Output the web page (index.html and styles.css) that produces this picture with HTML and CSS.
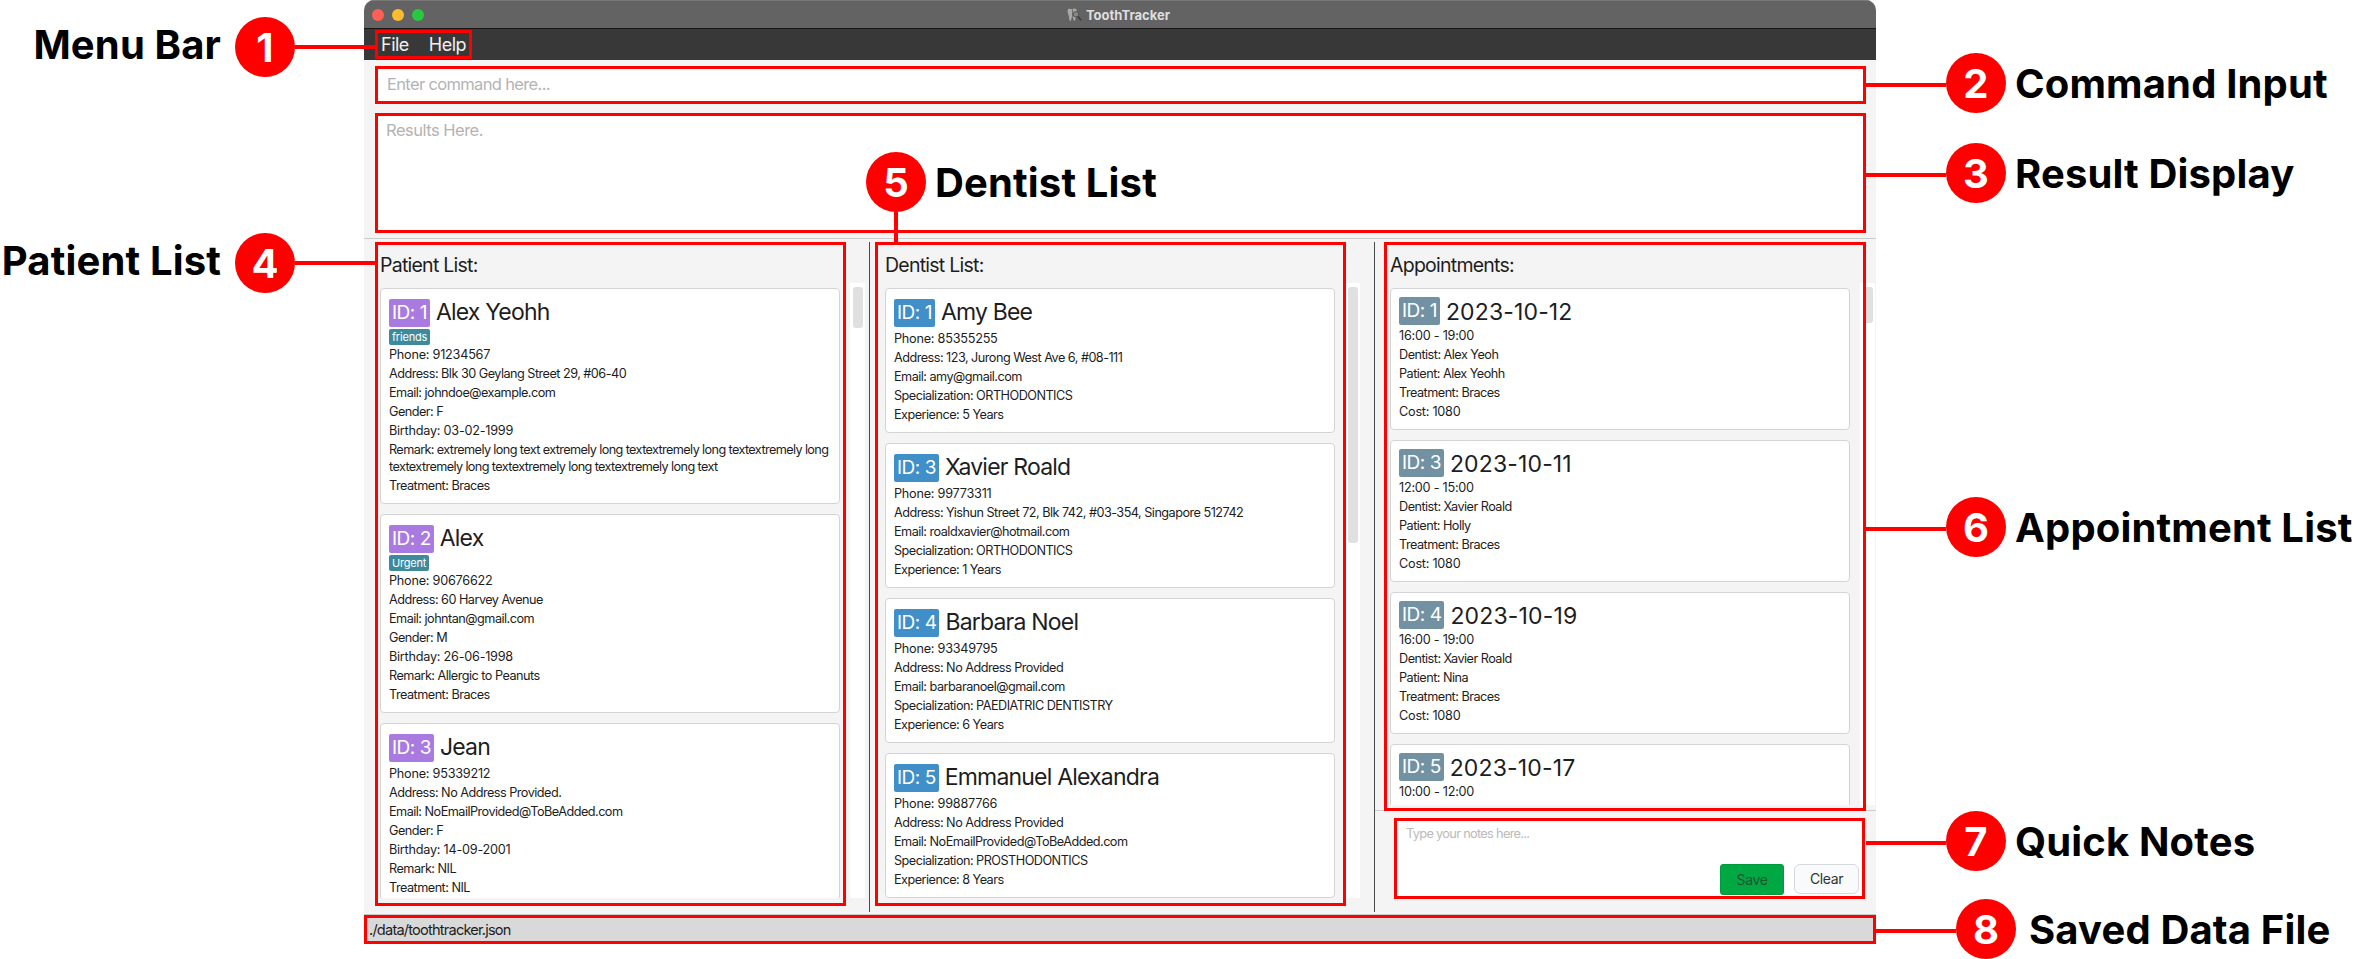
FILE: index.html
```html
<!DOCTYPE html>
<html lang="en">
<head>
<meta charset="utf-8">
<title>ToothTracker</title>
<link rel="stylesheet" href="styles.css">
</head>
<body>
<main class="window">
  <header class="titlebar">
    <div class="lights"><i class="light close"></i><i class="light min"></i><i class="light max"></i></div>
    <div class="title">
      <svg class="app-icon" viewBox="0 0 15 14" width="15" height="14">
        <path d="M1 1.2C2.5 0 4 1.600 5.500 1C7 0 8.500 0.400 9.300 1.200C10.500 3 9.500 6 8.800 8C8.500 10 8.300 13 7.300 13C6.300 13 6.500 9 5.400 9C4.300 9 4.400 13 3.300 13C2.200 13 2.200 9.500 1.700 7.500C1 5 0 3 1 1.200Z" fill="#a9a9a9"/>
        <path d="M5.600 1.500V9" stroke="#666" stroke-width="1"/>
        <circle cx="9" cy="6.300" r="2.700" fill="#8a8a8a" stroke="#505050" stroke-width="1"/>
        <path d="M11 8.500L14 12.300" stroke="#3c3c3c" stroke-width="1.500"/>
      </svg>
      <span>ToothTracker</span>
    </div>
  </header>
  <nav class="menubar"><span class="menu-file">File</span><span>Help</span></nav>
  <div class="command">Enter command here...</div>
  <div class="result">Results Here.</div>
  <div class="panes">
    <section class="pane patients">
      <h2>Patient List:</h2>
      <div class="list">
        <div class="cards">
          <article class="card">
            <div class="head"><b class="badge">ID: 1</b><span class="name">Alex Yeohh</span></div>
            <div class="tags"><span class="tag">friends</span></div>
            <p class="digits">Phone: 91234567</p>
            <p>Address: Blk 30 Geylang Street 29, #06-40</p>
            <p>Email: johndoe@example.com</p>
            <p>Gender: F</p>
            <p class="digits">Birthday: 03-02-1999</p>
            <p class="long">Remark: extremely long text extremely long textextremely long textextremely long<br>textextremely long textextremely long textextremely long text</p>
            <p>Treatment: Braces</p>
          </article>
          <article class="card">
            <div class="head"><b class="badge">ID: 2</b><span class="name">Alex</span></div>
            <div class="tags"><span class="tag">Urgent</span></div>
            <p class="digits">Phone: 90676622</p>
            <p>Address: 60 Harvey Avenue</p>
            <p>Email: johntan@gmail.com</p>
            <p>Gender: M</p>
            <p class="digits">Birthday: 26-06-1998</p>
            <p>Remark: Allergic to Peanuts</p>
            <p>Treatment: Braces</p>
          </article>
          <article class="card">
            <div class="head"><b class="badge">ID: 3</b><span class="name">Jean</span></div>
            <p class="digits">Phone: 95339212</p>
            <p>Address: No Address Provided.</p>
            <p>Email: NoEmailProvided@ToBeAdded.com</p>
            <p>Gender: F</p>
            <p class="digits">Birthday: 14-09-2001</p>
            <p>Remark: NIL</p>
            <p>Treatment: NIL</p>
          </article>
        </div>
        <div class="track"><div class="thumb"></div></div>
      </div>
    </section>
    <section class="pane dentists">
      <h2>Dentist List:</h2>
      <div class="list">
        <div class="cards">
          <article class="card">
            <div class="head"><b class="badge">ID: 1</b><span class="name">Amy Bee</span></div>
            <p class="digits">Phone: 85355255</p>
            <p>Address: 123, Jurong West Ave 6, #08-111</p>
            <p>Email: amy@gmail.com</p>
            <p>Specialization: ORTHODONTICS</p>
            <p>Experience: 5 Years</p>
          </article>
          <article class="card">
            <div class="head"><b class="badge">ID: 3</b><span class="name">Xavier Roald</span></div>
            <p class="digits">Phone: 99773311</p>
            <p>Address: Yishun Street 72, Blk 742, #03-354, Singapore 512742</p>
            <p>Email: roaldxavier@hotmail.com</p>
            <p>Specialization: ORTHODONTICS</p>
            <p>Experience: 1 Years</p>
          </article>
          <article class="card">
            <div class="head"><b class="badge">ID: 4</b><span class="name">Barbara Noel</span></div>
            <p class="digits">Phone: 93349795</p>
            <p>Address: No Address Provided</p>
            <p>Email: barbaranoel@gmail.com</p>
            <p>Specialization: PAEDIATRIC DENTISTRY</p>
            <p>Experience: 6 Years</p>
          </article>
          <article class="card">
            <div class="head"><b class="badge">ID: 5</b><span class="name">Emmanuel Alexandra</span></div>
            <p class="digits">Phone: 99887766</p>
            <p>Address: No Address Provided</p>
            <p>Email: NoEmailProvided@ToBeAdded.com</p>
            <p>Specialization: PROSTHODONTICS</p>
            <p>Experience: 8 Years</p>
          </article>
        </div>
        <div class="track"><div class="thumb"></div></div>
      </div>
    </section>
    <section class="pane appointments">
      <h2>Appointments:</h2>
      <div class="list">
        <div class="cards">
          <article class="card">
            <div class="head"><b class="badge">ID: 1</b><span class="name">2023-10-12</span></div>
            <p class="digits">16:00 - 19:00</p>
            <p>Dentist: Alex Yeoh</p>
            <p>Patient: Alex Yeohh</p>
            <p>Treatment: Braces</p>
            <p class="digits">Cost: 1080</p>
          </article>
          <article class="card">
            <div class="head"><b class="badge">ID: 3</b><span class="name">2023-10-11</span></div>
            <p class="digits">12:00 - 15:00</p>
            <p>Dentist: Xavier Roald</p>
            <p>Patient: Holly</p>
            <p>Treatment: Braces</p>
            <p class="digits">Cost: 1080</p>
          </article>
          <article class="card">
            <div class="head"><b class="badge">ID: 4</b><span class="name">2023-10-19</span></div>
            <p class="digits">16:00 - 19:00</p>
            <p>Dentist: Xavier Roald</p>
            <p>Patient: Nina</p>
            <p>Treatment: Braces</p>
            <p class="digits">Cost: 1080</p>
          </article>
          <article class="card">
            <div class="head"><b class="badge">ID: 5</b><span class="name">2023-10-17</span></div>
            <p class="digits">10:00 - 12:00</p>
          </article>
        </div>
        <div class="track"><div class="thumb"></div></div>
      </div>
      <div class="notes-area">
        <div class="notes">
          <span class="placeholder">Type your notes here...</span>
          <div class="buttons"><span class="btn save">Save</span><span class="btn clear">Clear</span></div>
        </div>
      </div>
    </section>
  </div>
  <footer class="status">./data/toothtracker.json</footer>
</main>

<!-- Annotation layer over the window -->
<div class="frame f1"></div>
<div class="frame f2"></div>
<div class="frame f3"></div>
<div class="frame f4"></div>
<div class="frame f5"></div>
<div class="frame f6"></div>
<div class="frame f7"></div>
<div class="frame f8"></div>
<div class="callout left c1"><span class="label">Menu Bar</span><b class="num">1</b><i class="wire"></i></div>
<div class="callout right c2"><i class="wire"></i><b class="num">2</b><span class="label">Command Input</span></div>
<div class="callout right c3"><i class="wire"></i><b class="num">3</b><span class="label">Result Display</span></div>
<div class="callout left c4"><span class="label">Patient List</span><b class="num">4</b><i class="wire"></i></div>
<div class="callout right c5"><b class="num">5</b><span class="label">Dentist List</span><i class="drop"></i></div>
<div class="callout right c6"><i class="wire"></i><b class="num">6</b><span class="label">Appointment List</span></div>
<div class="callout right c7"><i class="wire"></i><b class="num">7</b><span class="label">Quick Notes</span></div>
<div class="callout right c8"><i class="wire"></i><b class="num">8</b><span class="label">Saved Data File</span></div>
</body>
</html>
```
FILE: styles.css
```css
* { box-sizing: border-box; }
body {
  margin: 0;
  position: relative;
  width: 2354px;
  height: 959px;
  overflow: hidden;
  background: #fff;
  font-family: Inter, "Liberation Sans", sans-serif;
  color: #1d1d1d;
  white-space: nowrap;
}
h2, p { margin: 0; font-weight: 400; }

.window {
  display: flex;
  flex-direction: column;
  width: 1512px;
  height: 944px;
  margin-left: 364px;
  background: #f4f4f4;
  border-radius: 10px 10px 0 0;
  overflow: hidden;
}
.titlebar {
  display: grid;
  grid-template-columns: 1fr auto 1fr;
  align-items: center;
  height: 29px;
  padding-left: 8px;
  background: #636363;
  border-top: 1px solid #7a7a7a;
  border-bottom: 1px solid #161616;
}
.lights { display: flex; gap: 8px; }
.light { width: 12px; height: 12px; border-radius: 50%; }
.close { background: #ff5f57; }
.min { background: #febc2e; }
.max { background: #28c840; }
.title { display: flex; align-items: center; gap: 4px; margin-right: 11px; font-size: 13px; font-weight: 700; color: #dedede; }
.menubar { display: flex; gap: 20px; height: 31px; padding-left: 17px; background: #383838; color: #f0f0f0; font-size: 18px; line-height: 31px; letter-spacing: -0.5px; }

.command, .result { margin: 6px 10px 0 11px; padding-left: 12px; background: #fff; color: #b3b3b3; font-size: 16.500px; letter-spacing: -0.65px; }
.command { height: 38px; line-height: 37px; }
.result { height: 120px; margin-top: 9px; padding-left: 11px; line-height: 35px; letter-spacing: -0.5px; }

.panes {
  display: grid;
  grid-template-columns: 506px 505px 501px;
  height: 676px;
  margin-top: 5px;
  padding-top: 3px;
  border-top: 1px solid #cbcbcb;
}
.pane { display: flex; flex-direction: column; height: 670px; padding-left: 15px; }
.patients { padding-left: 16px; border-right: 1px solid #4a4a4a; }
.dentists { border-right: 1px solid #4a4a4a; }
h2 { height: 41px; line-height: 46px; font-size: 19.500px; letter-spacing: -0.75px; }
.list { display: flex; gap: 10px; height: 615px; overflow: hidden; }
.appointments .list { height: 522px; }
.cards { display: flex; flex-direction: column; gap: 10px; width: 460px; padding-top: 5px; }
.dentists .cards { width: 450px; }
.card { flex: none; padding: 10px 8px 8px; background: #fff; border: 1px solid #d4d4d4; border-radius: 4px; }
.patients .card:last-child { height: 220px; }
.appointments .card { padding-top: 8px; }
.appointments .card:last-child { height: 142px; }
.head { display: flex; gap: 6px; height: 30px; }
.appointments .head { height: 29px; }
.badge { height: 28px; padding: 0 3px; border-radius: 2px; color: #fff; font-size: 19px; font-weight: 400; line-height: 28px; letter-spacing: -0.5px; }
.patients .badge { background: #a97be0; }
.dentists .badge { background: #408fc8; }
.appointments .badge { background: #7292a4; }
.name { font-size: 23px; line-height: 27px; letter-spacing: -0.8px; }
.appointments .name { line-height: 31px; letter-spacing: 0.15px; }
.tags { height: 16px; display: flex; }
.tag { height: 16px; padding: 0 3px; border-radius: 2px; background: #3d8a9d; color: #fff; font-size: 11px; line-height: 16px; letter-spacing: -0.2px; }
.card p { padding: 1px 0; font-size: 12.700px; line-height: 17px; letter-spacing: -0.53px; }
.card .digits { letter-spacing: -0.25px; }
.card .long { letter-spacing: -0.62px; }
.track { width: 15px; background: #fff; padding: 4px 2px 0 3px; }
.thumb { border-radius: 3px; background: #e0e0e0; height: 41px; }
.dentists .thumb { height: 256px; }
.appointments .thumb { height: 36px; }

.notes-area { margin-left: -15px; margin-top: 5px; border-top: 1px solid #cbcbcb; padding: 7px 11px 0 19px; }
.notes { height: 81px; display: flex; flex-direction: column; justify-content: space-between; padding: 7px 6px 4px 12px; background: #fff; }
.placeholder { font-size: 12.800px; line-height: 17px; letter-spacing: -0.7px; color: #bababa; }
.buttons { display: flex; justify-content: flex-end; gap: 10px; }
.btn { height: 31px; font-size: 14px; line-height: 30px; letter-spacing: -0.4px; text-align: center; }
.save { width: 64px; background: #00a844; border: 1px solid #009a3e; border-radius: 3px; color: #24542f; }
.clear { width: 65px; height: 30px; line-height: 28px; background: #f9fafc; border: 1px solid #d6d9dc; border-radius: 6px; color: #333; }
.status { height: 30px; padding-left: 5px; background: #d9d9d9; border-top: 1px solid #cacaca; font-size: 14.600px; line-height: 30px; letter-spacing: -0.8px; }

.frame { position: absolute; border: 3px solid #f00; }
.f1 { left: 375px; top: 30px; width: 97px; height: 29px; }
.f2 { left: 375px; top: 66px; width: 1491px; height: 38px; }
.f3 { left: 375px; top: 113px; width: 1491px; height: 120px; }
.f4 { left: 375px; top: 242px; width: 471px; height: 664px; }
.f5 { left: 875px; top: 242px; width: 471px; height: 664px; }
.f6 { left: 1384px; top: 242px; width: 482px; height: 569px; }
.f7 { left: 1394px; top: 818px; width: 471px; height: 81px; }
.f8 { left: 364px; top: 915px; width: 1512px; height: 29px; }

.callout { position: absolute; display: flex; align-items: center; height: 60px; color: #000; font-size: 40px; font-weight: 700; line-height: 60px; letter-spacing: 0.15px; }
.num { width: 60px; height: 60px; border-radius: 50%; background: #f00; color: #fff; font-weight: 700; line-height: 62px; text-align: center; }
.wire { width: 80px; height: 4px; background: #f00; }
.right .wire { margin-top: 4px; }
.left .label { margin-right: 14px; padding-bottom: 4px; }
.right .label { margin-left: 9px; padding-top: 2px; }
.left { right: 1979px; }
.c1 { top: 17px; }
.c4 { top: 233px; }
.c2, .c3, .c6, .c7 { left: 1866px; }
.c2 { top: 53px; }
.c3 { top: 143px; }
.c5 { left: 866px; top: 152px; }
.c6 { top: 497px; }
.c7 { top: 811px; }
.c8 { left: 1876px; top: 899px; }
.c8 .label { margin-left: 13px; }
.drop { position: absolute; left: 28px; top: 60px; width: 4px; height: 30px; background: #f00; }
```
